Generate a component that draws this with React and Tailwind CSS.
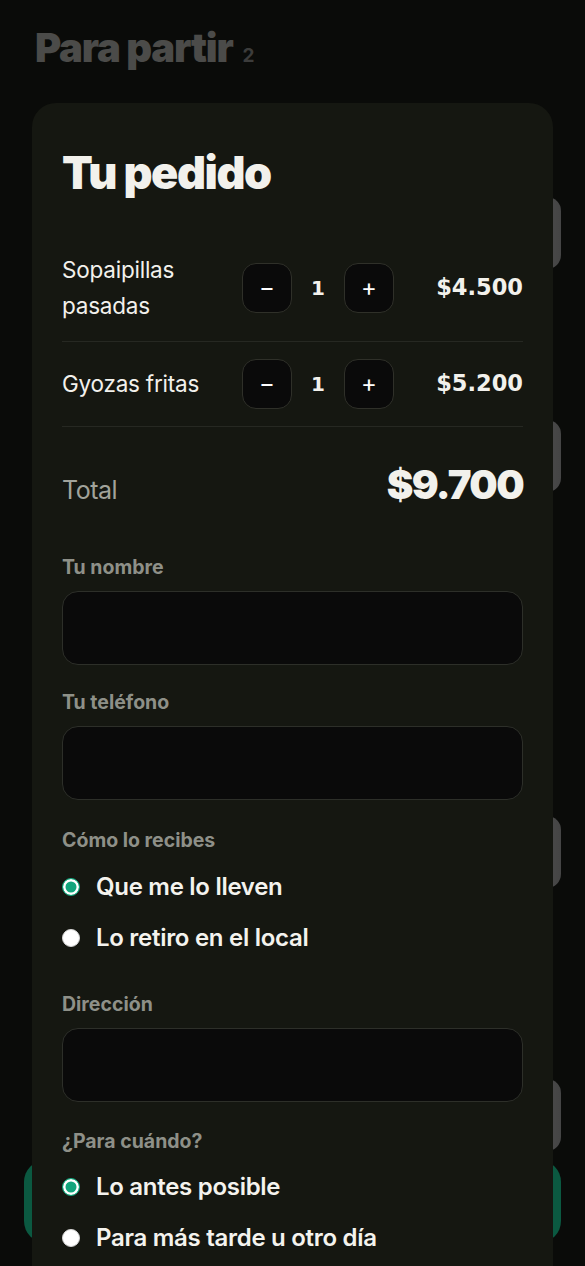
import { useState } from "react";

const items = [
  { id: 1, name: "Sopaipillas pasadas", price: 4500 },
  { id: 2, name: "Gyozas fritas", price: 5200 },
];

// menu cards behind the order sheet (only their thumbnails peek out)
const backdropCards = [
  { id: 1, gap: "mt-[119px]" },
  { id: 2, gap: "mt-[151px]" },
  { id: 3, gap: "mt-[324px]" },
  { id: 4, gap: "mt-[191px]" },
];

const fmt = (n) => "$" + n.toLocaleString("es-CL").replace(/,/g, ".");

function Radio({ checked, label, onClick }) {
  return (
    <button type="button" onClick={onClick} className="flex h-[28px] items-center gap-[16px] text-left">
      {checked ? (
        <span className="h-[18px] w-[18px] rounded-full border border-[#12a57c] bg-[#12a57c] shadow-[inset_0_0_0_2.5px_#ffffff]" />
      ) : (
        <span className="h-[18px] w-[18px] rounded-full border border-[#d4d4d4] bg-white" />
      )}
      <span className="text-[24px] font-semibold tracking-[-0.012em] text-[#f4f3ee]">{label}</span>
    </button>
  );
}

function Label({ children }) {
  return <div className="text-[19.5px] font-bold leading-[24px] text-[#8e9088]">{children}</div>;
}

function Field({ label, value, onChange }) {
  return (
    <div>
      <Label>{label}</Label>
      <input
        value={value}
        onChange={(e) => onChange(e.target.value)}
        className="mt-[12px] h-[74px] w-full rounded-[16px] border border-[#2d2f29] bg-[#0a0a0a] px-4 text-[20px] text-white outline-none"
      />
    </div>
  );
}

export default function App() {
  const [qty, setQty] = useState({ 1: 1, 2: 1 });
  const [name, setName] = useState("");
  const [phone, setPhone] = useState("");
  const [address, setAddress] = useState("");
  const [delivery, setDelivery] = useState("envio");
  const [when, setWhen] = useState("asap");

  const total = items.reduce((s, it) => s + it.price * qty[it.id], 0);

  const change = (id, d) => setQty((q) => ({ ...q, [id]: Math.max(0, q[id] + d) }));

  return (
    <div className="relative h-[1266px] overflow-hidden bg-[#141612]" style={{ fontFamily: "Inter, 'Liberation Sans', sans-serif" }}>
      {/* page behind */}
      <div className="px-6 pt-[26px]">
        <h1 className="flex items-baseline gap-[10px] px-[11px] text-[40px] font-black leading-[44px] tracking-[-0.03em] text-[#979793]">
          Para partir
          <span className="text-[19px] font-bold tracking-normal text-[#797976]">2</span>
        </h1>
        {backdropCards.map((c) => (
          <div key={c.id} className={`${c.gap} flex justify-end`}>
            <div className="h-[72px] w-[100px] rounded-[14px] bg-gradient-to-r from-[#d0d0d0] to-[#8a8a8a]" />
          </div>
        ))}
      </div>
      <button className="absolute bottom-[23px] left-6 right-6 h-[83px] rounded-[22px] bg-[#16b382]" />

      {/* overlay + order sheet */}
      <div className="absolute inset-0 bg-black/50">
        <div className="mx-[32px] mt-[103px] h-full rounded-t-[24px] bg-[#151711] px-[30px] pt-[44px]">
          <h2 className="text-[45px] font-black leading-[52px] tracking-[-0.032em] text-[#f2f1ec]">Tu pedido</h2>

          <div className="mt-[36px]">
            {items.map((it) => (
              <div key={it.id} className="flex items-center gap-[16px] border-b border-[#262822] py-[17px]">
                <div className="min-w-0 flex-1 text-[22.5px] leading-[36px] tracking-[-0.01em] text-[#f2f1ec]">{it.name}</div>
                <div className="flex items-center">
                  <button
                    onClick={() => change(it.id, -1)}
                    className="flex h-[50px] w-[50px] items-center justify-center rounded-[14px] border border-[#2f3029] bg-[#0a0a0a] text-[24px] text-white"
                  >
                    −
                  </button>
                  <span className="w-[52px] text-center text-[20px] font-bold text-[#f2f1ec]" style={{ fontFamily: "'DejaVu Sans', sans-serif" }}>
                    {qty[it.id]}
                  </span>
                  <button
                    onClick={() => change(it.id, 1)}
                    className="flex h-[50px] w-[50px] items-center justify-center rounded-[14px] border border-[#2f3029] bg-[#0a0a0a] text-[24px] text-white"
                  >
                    +
                  </button>
                </div>
                <div className="w-[113px] text-right text-[22.5px] font-bold text-[#f2f1ec]" style={{ fontFamily: "'DejaVu Sans', sans-serif" }}>
                  {fmt(it.price * qty[it.id])}
                </div>
              </div>
            ))}
          </div>

          <div className="flex items-baseline justify-between pt-[36px]">
            <span className="text-[25px] tracking-[-0.02em] text-[#a1a39b]">Total</span>
            <span className="text-[40px] font-black leading-[44px] tracking-[-0.04em] text-[#f2f1ec]">{fmt(total)}</span>
          </div>

          <div className="mt-[45px] flex flex-col gap-[25px]">
            <Field label="Tu nombre" value={name} onChange={setName} />
            <Field label="Tu teléfono" value={phone} onChange={setPhone} />
          </div>

          <div className="mt-[28px]">
            <Label>Cómo lo recibes</Label>
          </div>
          <div className="mt-[21px] flex flex-col gap-[23px]">
            <Radio checked={delivery === "envio"} label="Que me lo lleven" onClick={() => setDelivery("envio")} />
            <Radio checked={delivery === "retiro"} label="Lo retiro en el local" onClick={() => setDelivery("retiro")} />
          </div>

          <div className="mt-[40px]">
            <Field label="Dirección" value={address} onChange={setAddress} />
          </div>

          <div className="mt-[27px]">
            <Label>¿Para cuándo?</Label>
          </div>
          <div className="mt-[20px] flex flex-col gap-[23px]">
            <Radio checked={when === "asap"} label="Lo antes posible" onClick={() => setWhen("asap")} />
            <Radio checked={when === "later"} label="Para más tarde u otro día" onClick={() => setWhen("later")} />
          </div>
        </div>
      </div>
    </div>
  );
}
